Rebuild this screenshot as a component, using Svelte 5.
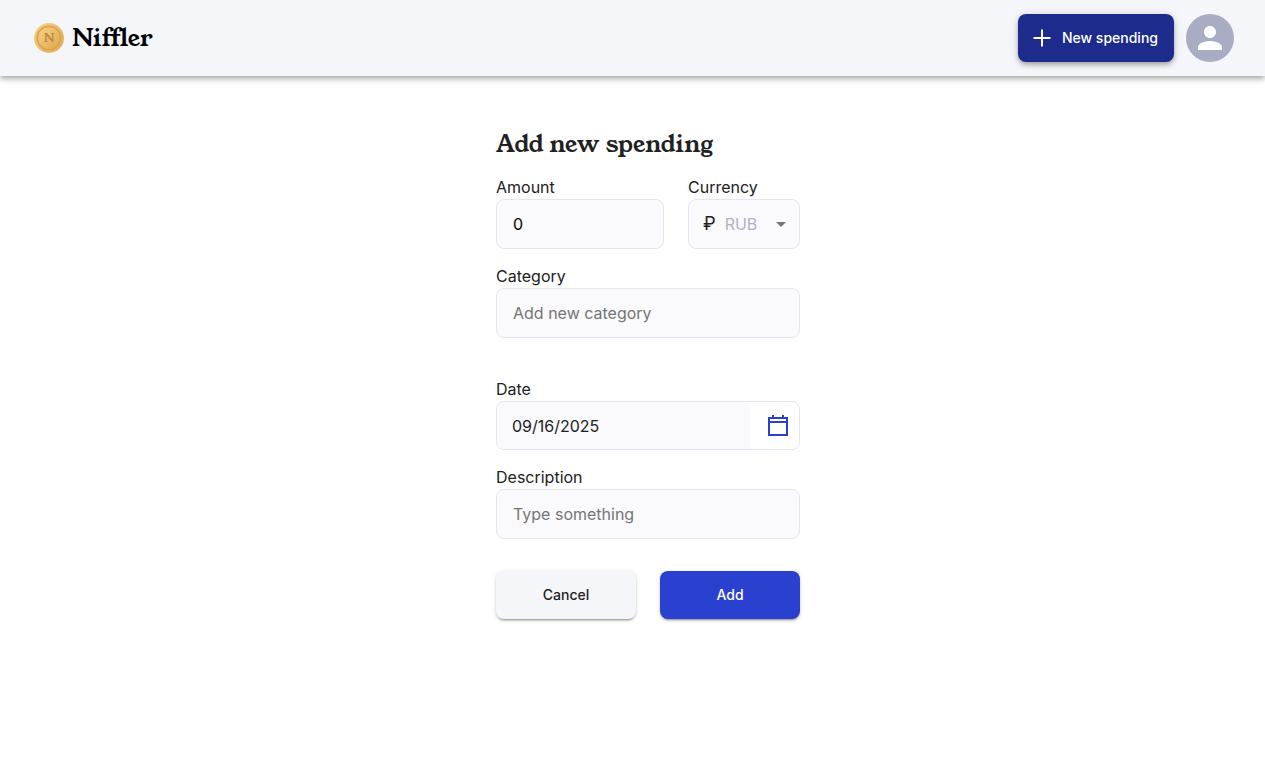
<script>
  let amount = $state('0');
  let currency = $state('RUB');
  let category = $state('');
  let date = $state('09/16/2025');
  let description = $state('');
</script>

<header>
  <a class="brand" href="#home">
    <svg width="30" height="30" viewBox="0 0 30 30" aria-hidden="true">
      <defs>
        <linearGradient id="rim" x1="0" y1="0" x2="1" y2="1">
          <stop offset="0" stop-color="#f8d38c" />
          <stop offset="1" stop-color="#e2aa50" />
        </linearGradient>
        <linearGradient id="face" x1="0" y1="0" x2="1" y2="1">
          <stop offset="0" stop-color="#f8d48a" />
          <stop offset="1" stop-color="#dda64c" />
        </linearGradient>
      </defs>
      <circle cx="15" cy="15" r="15" fill="url(#rim)" />
      <circle cx="15" cy="15" r="11.7" fill="url(#face)" stroke="#d9a650" stroke-width="1.8" />
      <text x="15" y="19" text-anchor="middle" class="coin-letter">N</text>
    </svg>
    <span>Niffler</span>
  </a>
  <div class="actions">
    <a class="button new" href="#spending">
      <svg width="24" height="24" viewBox="0 0 24 24" aria-hidden="true">
        <path d="M12 3.5v17M3.5 12h17" stroke="#fff" stroke-width="2" fill="none" />
      </svg>
      New spending
    </a>
    <button class="avatar" type="button" aria-label="Menu">
      <svg width="36" height="36" viewBox="0 0 24 24" aria-hidden="true">
        <path fill="#fff" d="M12 12c2.21 0 4-1.79 4-4s-1.79-4-4-4-4 1.79-4 4 1.79 4 4 4zm0 2c-2.67 0-8 1.34-8 4v2h16v-2c0-2.66-5.33-4-8-4z" />
      </svg>
    </button>
  </div>
</header>

<main>
  <form onsubmit={(e) => e.preventDefault()}>
    <h2>Add new spending</h2>
    <div class="pair">
      <div class="field amount">
        <label for="amount">Amount</label>
        <input id="amount" class="box" type="text" bind:value={amount} />
      </div>
      <div class="field currency">
        <label for="currency">Currency</label>
        <div class="box select">
          <span class="sign">₽</span>
          <select id="currency" bind:value={currency}>
            <option value="RUB">RUB</option>
          </select>
          <svg width="10" height="5" viewBox="0 0 10 5" aria-hidden="true">
            <path d="M0 0l5 5 5-5z" fill="#757575" />
          </svg>
        </div>
      </div>
    </div>
    <div class="field category">
      <label for="category">Category</label>
      <input id="category" class="box" type="text" placeholder="Add new category" bind:value={category} />
    </div>
    <div class="field">
      <label for="date">Date</label>
      <div class="date">
        <input id="date" type="text" bind:value={date} />
        <button type="button" aria-label="Choose date">
          <svg width="20" height="21" viewBox="0 0 20 21" aria-hidden="true">
            <path d="M1 3h18v17H1zM1 7h18M5 0v3M15 0v3" fill="none" stroke="#2a40ce" stroke-width="2" />
          </svg>
        </button>
      </div>
    </div>
    <div class="field">
      <label for="description">Description</label>
      <input id="description" class="box" type="text" placeholder="Type something" bind:value={description} />
    </div>
    <div class="buttons">
      <button class="button cancel" type="button">Cancel</button>
      <button class="button add" type="submit">Add</button>
    </div>
  </form>
</main>

<style>
  :global(body) {
    margin: 0;
    background: #fff;
    color: #212121;
    font: 16px/24px Inter, sans-serif;
  }
  * {
    box-sizing: border-box;
  }
  svg {
    display: block;
    flex: none;
  }
  header {
    display: flex;
    align-items: center;
    justify-content: space-between;
    padding: 14px 31px 14px 34px;
    background: #f5f6fa;
    box-shadow: 0 2px 4px -1px rgba(0, 0, 0, 0.2), 0 4px 5px rgba(0, 0, 0, 0.14), 0 1px 10px rgba(0, 0, 0, 0.12);
  }
  .brand {
    display: flex;
    align-items: center;
    gap: 8px;
    color: #000;
    font: 400 24px/32px 'Young Serif', 'Liberation Serif', serif;
    text-decoration: none;
  }
  .coin-letter {
    font: 400 12px 'Young Serif', 'Liberation Serif', serif;
    fill: #b98a3e;
  }
  .actions {
    display: flex;
    gap: 12px;
  }
  .button {
    display: flex;
    align-items: center;
    justify-content: center;
    height: 48px;
    border: 0;
    border-radius: 8px;
    font: 500 14px/24px Inter, sans-serif;
    text-decoration: none;
    cursor: pointer;
    box-shadow: 0 3px 1px -2px rgba(0, 0, 0, 0.2), 0 2px 2px rgba(0, 0, 0, 0.14), 0 1px 5px rgba(0, 0, 0, 0.12);
  }
  .new {
    gap: 8px;
    padding: 0 16px 0 12px;
    background: #1d2b8c;
    color: #fff;
    box-shadow: 0 2px 4px -1px rgba(0, 0, 0, 0.2), 0 4px 5px rgba(0, 0, 0, 0.14), 0 1px 10px rgba(0, 0, 0, 0.12);
  }
  .avatar {
    display: grid;
    place-items: center;
    width: 48px;
    height: 48px;
    padding: 0;
    border: 0;
    border-radius: 50%;
    background: #a9adc3;
  }
  main {
    padding: 52px 0 32px 31px;
  }
  form {
    display: flex;
    flex-direction: column;
    gap: 15px;
    max-width: 304px;
    margin: 0 auto;
  }
  h2 {
    margin: 0;
    font: 400 24px/32px 'Young Serif', 'Liberation Serif', serif;
  }
  .pair {
    display: flex;
    gap: 24px;
  }
  .field {
    display: flex;
    flex-direction: column;
    min-width: 0;
  }
  .amount {
    flex: 3;
  }
  .currency {
    flex: 2;
  }
  .category {
    margin-bottom: 24px;
  }
  .box {
    width: 100%;
    height: 50px;
    padding: 0 16px;
    border: 1px solid #e4e4f2;
    border-radius: 8px;
    background: #fafafc;
    color: #000;
    font: 16px/24px Inter, sans-serif;
  }
  ::placeholder {
    color: #757575;
    opacity: 1;
  }
  .select {
    display: flex;
    align-items: center;
    padding: 0 13px 0 14px;
  }
  .sign {
    margin-right: 9px;
    color: #212121;
    font-size: 18px;
  }
  select {
    flex: 1;
    min-width: 0;
    padding: 0;
    border: 0;
    appearance: none;
    background: none;
    color: #afb2ca;
    font: inherit;
  }
  .date {
    display: flex;
    height: 49px;
    overflow: hidden;
    border: 1px solid #e4e4f2;
    border-radius: 8px;
  }
  .date input {
    flex: 1;
    min-width: 0;
    padding: 0 15px;
    border: 0;
    background: #fafafc;
    color: #212121;
    font: inherit;
  }
  .date button {
    padding: 0 11px 0 18px;
    border: 0;
    background: #fff;
  }
  .buttons {
    display: flex;
    gap: 24px;
    margin-top: 17px;
  }
  .buttons .button {
    flex: 1;
  }
  .cancel {
    background: #f5f6fa;
    color: #212121;
  }
  .add {
    background: #2a40ce;
    color: #fff;
  }
</style>
